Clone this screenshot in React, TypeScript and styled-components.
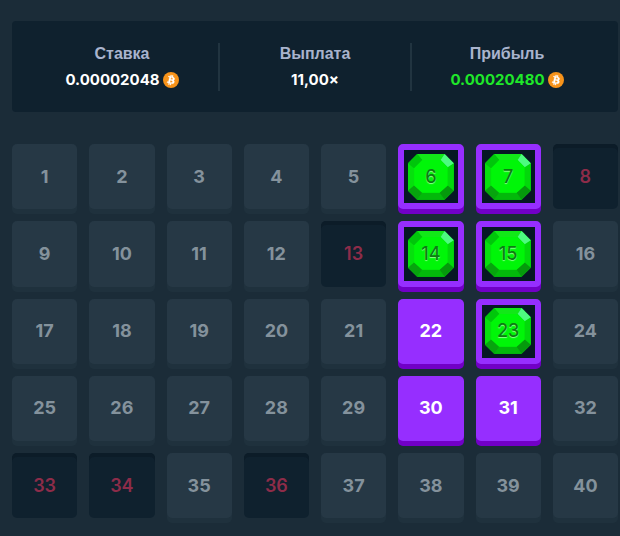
import React from "react";
import styled, { createGlobalStyle, css } from "styled-components";

const GlobalStyle = createGlobalStyle`
  *, *::before, *::after { box-sizing: border-box; }
  body {
    margin: 0;
    background: #1b2c38;
    font-family: Inter, "Liberation Sans", sans-serif;
  }
`;

const Page = styled.main`
  display: flex;
  flex-direction: column;
  gap: 32px;
  padding: 21px 2px 17px 12px;
`;

const Summary = styled.section`
  display: grid;
  grid-template-columns: repeat(3, 1fr);
  padding: 22px 16px 21px 14px;
  border-radius: 4px;
  background: #0f212e;
`;

const Stat = styled.div`
  display: flex;
  flex-direction: column;
  align-items: center;
  gap: 4px;
  height: 48px;

  & + & {
    border-left: 2px solid #213440;
  }
`;

const StatLabel = styled.span`
  font: bold 16px/22px "Liberation Sans", sans-serif;
  color: #a9b4cd;
`;

const StatValue = styled.span<{ $positive?: boolean }>`
  display: flex;
  align-items: center;
  gap: 3px;
  font-size: 15px;
  font-weight: 700;
  line-height: 22px;
  color: ${(p) => (p.$positive ? "#1fe82a" : "#ffffff")};
`;

const Board = styled.div`
  display: grid;
  grid-template-columns: repeat(8, 1fr);
  gap: 12px;
`;

type Kind = "idle" | "missed" | "picked" | "gem";

const looks = {
  idle: css`
    background: #263845;
    box-shadow: 0 5px 0 #1f313d;
    color: #84929c;
  `,
  missed: css`
    background: #0f212e;
    box-shadow: inset 0 4px 0 #0c1c28;
    color: #8d2c49;
    font-weight: 600;
  `,
  picked: css`
    background: #962eff;
    box-shadow: 0 5px 0 #7100c7;
    color: #ffffff;
  `,
  gem: css`
    background: #071824;
    border: 6px solid #962eff;
    box-shadow: 0 5px 0 #7100c7;
    color: #0b7d12;
    font-weight: 500;
    text-shadow: 0 1px 1px #8dff8d;
  `,
};

const Tile = styled.button<{ $kind: Kind }>`
  position: relative;
  display: grid;
  place-items: center;
  min-width: 0;
  aspect-ratio: 1;
  padding: 0;
  border: 0;
  border-radius: 5px;
  font-family: inherit;
  font-size: 18px;
  font-weight: 700;
  line-height: 22px;
  cursor: pointer;
  ${(p) => looks[p.$kind]}
`;

const GemFrame = styled.span`
  position: absolute;
  inset: 0;
  display: grid;
  place-items: center;

  svg {
    width: 86%;
  }
`;

const TileNumber = styled.span`
  position: relative;
`;

const Bitcoin = () => (
  <svg width="16" height="16" viewBox="0 0 32 32" role="img" aria-label="BTC">
    <circle cx="16" cy="16" r="16" fill="#f7931a" />
    <path
      fill="#fff"
      stroke="#fff"
      strokeWidth="0.6"
      d="M23.2 14c.3-2.100-1.300-3.200-3.500-4l.7-2.900-1.700-.4-.7 2.800-1.400-.3.700-2.800-1.800-.5-.7 2.900-3.500-.9-.5 1.900s1.300.3 1.300.3c.7.200.8.600.8 1l-2 7.900c-.1.200-.3.500-.8.400l-1.300-.3-.9 2 3.500.9-.7 2.900 1.700.4.700-2.800 1.400.4-.7 2.800 1.800.4.700-2.900c3 .6 5.200.3 6.100-2.300.8-2.200 0-3.400-1.500-4.200 1.100-.3 2-1 2.300-2.700Zm-4 5.600c-.5 2.200-4.200 1-5.400.7l1-3.900c1.200.3 5 .9 4.400 3.200Zm.5-5.600c-.5 2-3.500 1-4.500.7l.9-3.500c1 .2 4.100.7 3.600 2.800Z"
    />
  </svg>
);

const Gem = () => (
  <svg viewBox="0 0 45 45" aria-hidden="true">
    <path fill="#00d40a" d="M9 0H36L45 9V36L36 45H9L0 36V9Z" />
    <path fill="#12e818" d="M9 0H36L32 6H14Z" />
    <path fill="#06e00d" d="M0 9L6 14V31L0 36Z" />
    <path fill="#00c60b" d="M9 0L14 6L6 14L0 9Z" />
    <path fill="#03d80b" d="M45 9L39 13V31L45 36Z" />
    <path fill="#4dfb80" d="M36 0L45 9L39 13L32 6Z" />
    <path fill="#03b90b" d="M9 45L14 38H31L36 45Z" />
    <path fill="#07a40e" d="M0 36L6 31L14 38L9 45Z" />
    <path fill="#059a0c" d="M45 36L39 31L31 38L36 45Z" />
    <path fill="#00f608" d="M14 6H32L39 13V31L31 38H14L6 31V14Z" />
  </svg>
);

const GEMS = [6, 7, 14, 15, 23];
const PICKED = [22, 30, 31];
const MISSED = [8, 13, 33, 34, 36];

const kindOf = (n: number): Kind => {
  if (GEMS.includes(n)) return "gem";
  if (PICKED.includes(n)) return "picked";
  if (MISSED.includes(n)) return "missed";
  return "idle";
};

const NUMBERS = Array.from({ length: 40 }, (_, i) => i + 1);

export default function App() {
  return (
    <>
      <GlobalStyle />
      <Page>
        <Summary>
          <Stat>
            <StatLabel>Ставка</StatLabel>
            <StatValue>
              0.00002048
              <Bitcoin />
            </StatValue>
          </Stat>
          <Stat>
            <StatLabel>Выплата</StatLabel>
            <StatValue>11,00×</StatValue>
          </Stat>
          <Stat>
            <StatLabel>Прибыль</StatLabel>
            <StatValue $positive>
              0.00020480
              <Bitcoin />
            </StatValue>
          </Stat>
        </Summary>
        <Board>
          {NUMBERS.map((n) => {
            const kind = kindOf(n);
            return (
              <Tile key={n} type="button" $kind={kind}>
                {kind === "gem" && (
                  <GemFrame>
                    <Gem />
                  </GemFrame>
                )}
                <TileNumber>{n}</TileNumber>
              </Tile>
            );
          })}
        </Board>
      </Page>
    </>
  );
}
